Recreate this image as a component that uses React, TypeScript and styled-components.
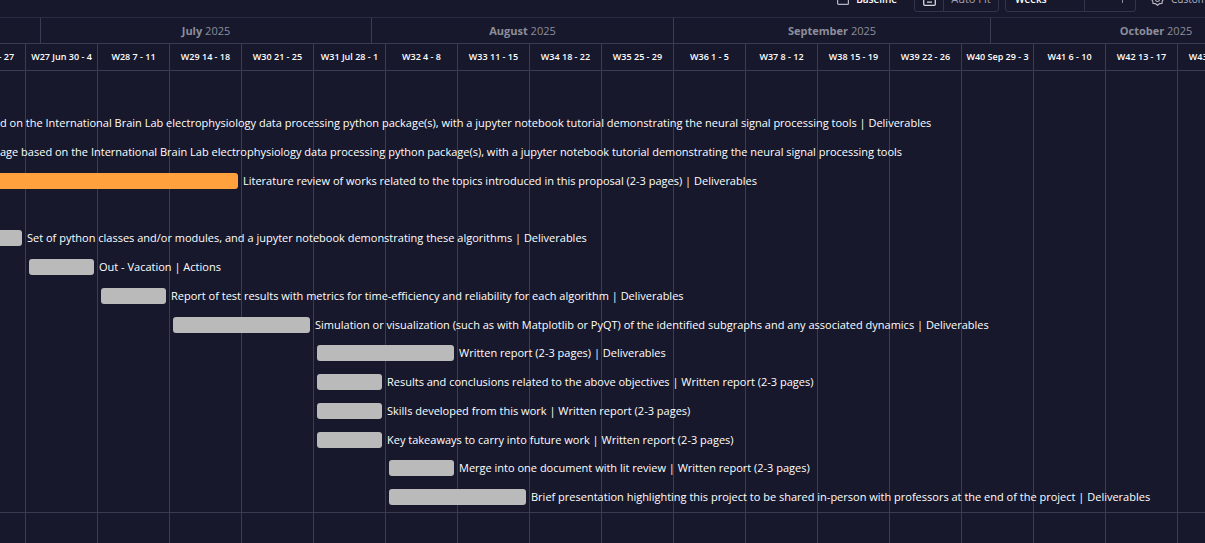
import React from 'react';
import styled, { createGlobalStyle } from 'styled-components';

const WEEK = 72;
const SCROLLED = 46;

const c = {
  bg: '#17182c',
  line: '#3b3c51',
  rule: '#2b2c42',
  control: '#33344a',
  text: '#ffffff',
  muted: '#8d8e9b',
  done: '#bababa',
  active: '#ffa23e',
};

const Global = createGlobalStyle`
  *, *::before, *::after { box-sizing: border-box; }
  html, body { margin: 0; background: ${c.bg}; }
  body {
    color: ${c.text};
    font-family: "Open Sans", "Noto Sans", sans-serif;
    overflow: hidden;
  }
  button, select { font: inherit; color: inherit; background: none; margin: 0; padding: 0; border: 0; }
`;

const Page = styled.main`
  display: flex;
  flex-direction: column;
  height: 100vh;
  overflow: hidden;
`;

const Toolbar = styled.header`
  flex: none;
  display: flex;
  justify-content: flex-end;
  align-items: flex-end;
  height: 18px;
  padding-bottom: 5px;
  border-bottom: 1px solid ${c.rule};
  font-size: 10px;
  line-height: 16px;
  font-weight: 600;
  overflow: hidden;
`;

const ToolButton = styled.button<{ $muted?: boolean }>`
  flex: none;
  display: flex;
  align-items: center;
  gap: 7px;
  height: 28px;
  padding-top: 2px;
  color: ${(p) => (p.$muted ? '#b4b5c0' : c.text)};
  font-weight: ${(p) => (p.$muted ? 400 : 600)};
  white-space: nowrap;

  svg { flex: none; }
`;

const BaselineButton = styled(ToolButton)`
  margin-right: 17px;
`;

const CustomizeButton = styled(ToolButton)`
  width: 54px;
  margin-left: 15px;
`;

const Group = styled.div`
  flex: none;
  display: flex;
  height: 28px;
  border: 1px solid ${c.control};
  border-radius: 3px;

  & + & { margin-left: 6px; }
`;

const IconButton = styled.button`
  display: grid;
  place-items: center;
  width: 29px;
  padding-top: 2px;
  border-right: 1px solid ${c.control};
`;

const FitButton = styled.button`
  width: 54px;
  padding-top: 2px;
  color: #a2a3af;
  font-size: 11px;
  font-weight: 400;
`;

const Scale = styled.select`
  appearance: none;
  width: 79px;
  padding: 2px 0 0 9px;
  border-right: 1px solid ${c.control};
`;

const ZoomButton = styled.button`
  display: grid;
  place-items: center;
  width: 25px;
`;

const Months = styled.div`
  flex: none;
  display: flex;
  height: 26px;
  border-bottom: 1px solid ${c.line};
`;

const Month = styled.div<{ $width: number }>`
  flex: none;
  width: ${(p) => p.$width}px;
  border-right: 1px solid ${c.line};
  color: ${c.muted};
  font-size: 11px;
  line-height: 26px;
  text-align: center;
  white-space: nowrap;

  b { font-weight: 700; }
`;

const Weeks = styled.div`
  flex: none;
  display: flex;
  height: 27px;
  margin-left: -${SCROLLED}px;
  border-bottom: 1px solid ${c.line};
`;

const Week = styled.div`
  flex: none;
  width: ${WEEK}px;
  border-right: 1px solid ${c.line};
  font-size: 9px;
  font-weight: 600;
  line-height: 26px;
  text-align: center;
  white-space: nowrap;
`;

const Chart = styled.section`
  flex: 1;
  background: repeating-linear-gradient(
      to right,
      transparent 0 ${WEEK - 1}px,
      ${c.line} ${WEEK - 1}px ${WEEK}px
    ) -${SCROLLED}px 0 / calc(100% + ${SCROLLED}px) 100% no-repeat;
`;

const Lane = styled.div`
  padding-top: 38px;
  border-bottom: 1px solid ${c.line};
  overflow: hidden;
`;

const Rows = styled.ul`
  display: grid;
  grid-template-rows: repeat(14, 1fr);
  height: 403px;
  margin: 0;
  padding: 0;
  list-style: none;
`;

const Row = styled.li<{ $start: number }>`
  display: flex;
  align-items: flex-start;
  gap: 5px;
  padding-top: 6px;
  margin-left: ${(p) => p.$start * WEEK + 3 - SCROLLED}px;
  font-size: 11px;
  line-height: 16px;
  white-space: nowrap;
`;

const ClippedRow = styled(Row)`
  margin-left: 0;
`;

const Bar = styled.span<{ $weeks: number; $active?: boolean }>`
  flex: none;
  width: ${(p) => p.$weeks * WEEK - 7}px;
  height: 16px;
  border-radius: 3px;
  background: ${(p) => (p.$active ? c.active : c.done)};
`;

const months = [
  { name: '', year: '', width: 41 },
  { name: 'July', year: '2025', width: 331 },
  { name: 'August', year: '2025', width: 302 },
  { name: 'September', year: '2025', width: 317 },
  { name: 'October', year: '2025', width: 331 },
];

const weeks = [
  'W26 23 - 27', 'W27 Jun 30 - 4', 'W28 7 - 11', 'W29 14 - 18', 'W30 21 - 25', 'W31 Jul 28 - 1',
  'W32 4 - 8', 'W33 11 - 15', 'W34 18 - 22', 'W35 25 - 29', 'W36 1 - 5', 'W37 8 - 12',
  'W38 15 - 19', 'W39 22 - 26', 'W40 Sep 29 - 3', 'W41 6 - 10', 'W42 13 - 17', 'W43 20 - 24',
];

type Task = { start?: number; weeks?: number; active?: boolean; label: string };

const tasks: Task[] = [
  { label: 'd on the International Brain Lab electrophysiology data processing python package(s), with a jupyter notebook tutorial demonstrating the neural signal processing tools | Deliverables' },
  { label: 'age based on the International Brain Lab electrophysiology data processing python package(s), with a jupyter notebook tutorial demonstrating the neural signal processing tools' },
  { start: 0, weeks: 4, active: true, label: 'Literature review of works related to the topics introduced in this proposal (2-3 pages) | Deliverables' },
  { label: '' },
  { start: 0, weeks: 1, label: 'Set of python classes and/or modules, and a jupyter notebook demonstrating these algorithms | Deliverables' },
  { start: 1, weeks: 1, label: 'Out - Vacation | Actions' },
  { start: 2, weeks: 1, label: 'Report of test results with metrics for time-efficiency and reliability for each algorithm | Deliverables' },
  { start: 3, weeks: 2, label: 'Simulation or visualization (such as with Matplotlib or PyQT) of the identified subgraphs and any associated dynamics | Deliverables' },
  { start: 5, weeks: 2, label: 'Written report (2-3 pages) | Deliverables' },
  { start: 5, weeks: 1, label: 'Results and conclusions related to the above objectives | Written report (2-3 pages)' },
  { start: 5, weeks: 1, label: 'Skills developed from this work | Written report (2-3 pages)' },
  { start: 5, weeks: 1, label: 'Key takeaways to carry into future work | Written report (2-3 pages)' },
  { start: 6, weeks: 1, label: 'Merge into one document with lit review | Written report (2-3 pages)' },
  { start: 6, weeks: 2, label: 'Brief presentation highlighting this project to be shared in-person with professors at the end of the project | Deliverables' },
];

const BaselineIcon = () => (
  <svg width="12" height="12" viewBox="0 0 12 12" fill="none" stroke="#b4b5c0" strokeWidth="1.2" aria-hidden="true">
    <rect x="0.6" y="0.6" width="10.8" height="10.8" rx="1" />
  </svg>
);

const CalendarIcon = () => (
  <svg width="13" height="14" viewBox="0 0 13 14" fill="none" stroke="#d6d6dd" strokeWidth="1.3" aria-hidden="true">
    <rect x="0.7" y="1.7" width="11.6" height="11.6" rx="1" />
    <path d="M1 5h11M4 0v3M9 0v3M4 10.2h5" />
  </svg>
);

const GearIcon = () => (
  <svg width="13" height="13" viewBox="0 0 13 13" fill="none" stroke="#b4b5c0" strokeWidth="1.2" strokeLinejoin="round" aria-hidden="true">
    <path d="M6.5 .7 8.2 2.3 11 2.3 11.2 4.9 12.3 6.5 11.2 8.3 11 10.5 8.3 10.7 6.5 12.3 4.7 10.7 2 10.5 1.8 8.3.7 6.5 1.8 4.9 2 2.3 4.8 2.3Z" />
    <circle cx="6.5" cy="6.5" r="2" />
  </svg>
);

const ZoomIcon = ({ plus }: { plus?: boolean }) => (
  <svg width="9" height="9" viewBox="0 0 9 9" stroke="#8f909d" aria-hidden="true">
    <path d={plus ? 'M0 4.5h9M4.5 0v9' : 'M0 4.5h9'} />
  </svg>
);

export default function App() {
  return (
    <Page>
      <Global />
      <Toolbar>
        <BaselineButton type="button">
          <BaselineIcon />
          Baseline
        </BaselineButton>
        <Group>
          <IconButton type="button" aria-label="Calendar">
            <CalendarIcon />
          </IconButton>
          <FitButton type="button">Auto Fit</FitButton>
        </Group>
        <Group>
          <Scale aria-label="Time scale" defaultValue="Weeks">
            <option>Weeks</option>
          </Scale>
          <ZoomButton type="button" aria-label="Zoom out">
            <ZoomIcon />
          </ZoomButton>
          <ZoomButton type="button" aria-label="Zoom in">
            <ZoomIcon plus />
          </ZoomButton>
        </Group>
        <CustomizeButton type="button" $muted>
          <GearIcon />
          Customize
        </CustomizeButton>
      </Toolbar>
      <Months>
        {months.map((m) => (
          <Month key={m.name} $width={m.width}>
            <b>{m.name}</b> {m.year}
          </Month>
        ))}
      </Months>
      <Weeks>
        {weeks.map((w) => (
          <Week key={w}>{w}</Week>
        ))}
      </Weeks>
      <Chart>
        <Lane>
          <Rows>
            {tasks.map((t, i) =>
              t.start === undefined ? (
                <ClippedRow key={i} $start={0}>{t.label}</ClippedRow>
              ) : (
                <Row key={i} $start={t.start}>
                  <Bar $weeks={t.weeks ?? 1} $active={t.active} />
                  {t.label}
                </Row>
              ),
            )}
          </Rows>
        </Lane>
      </Chart>
    </Page>
  );
}
